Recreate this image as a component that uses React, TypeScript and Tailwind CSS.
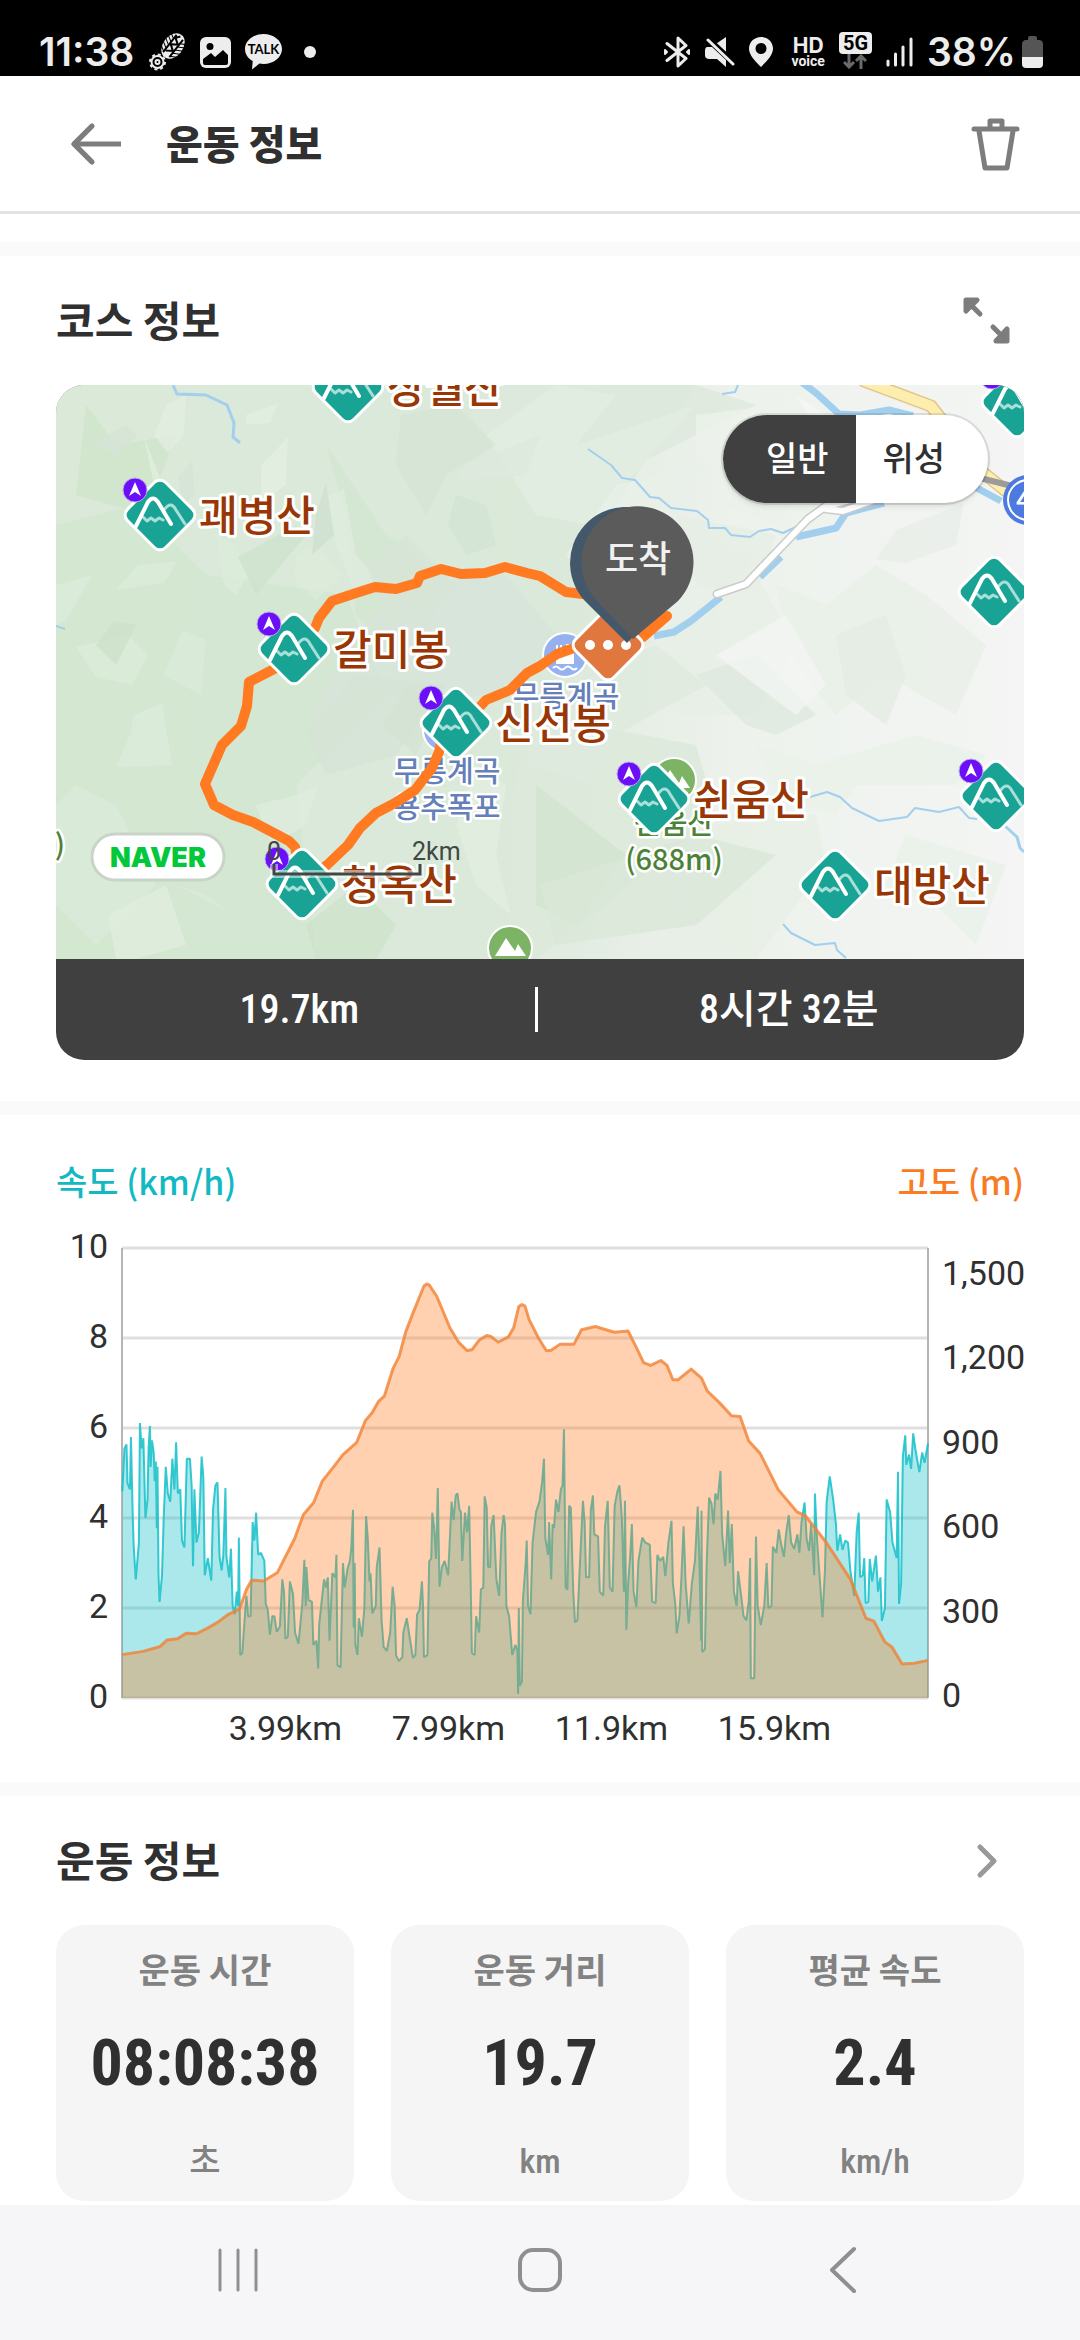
import { useState } from "react";

const peaks = [
  { name: "상월산", x: 292, y: 2, flag: false },
  { name: "괘병산", x: 104, y: 130, flag: true },
  { name: "갈미봉", x: 238, y: 264, flag: true },
  { name: "청옥산", x: 246, y: 499, flag: true },
  { name: "신선봉", x: 400, y: 338, flag: true },
  { name: "쉰움산", x: 598, y: 414, flag: true },
  { name: "대방산", x: 779, y: 500, flag: false },
  { name: "", x: 938, y: 207, flag: false },
  { name: "", x: 940, y: 411, flag: true },
  { name: "", x: 961, y: 17, flag: true },
];

const route =
  "M611 231 L587 252 L552 262 L518 263 L501 269 L484 281 L471 288 L454 305 L430 315 L421 325 L400 338 L386 352 L383 367 L376 383 L359 405 L339 418 L320 428 L304 443 L292 460 L271 480 L246 499 L239 462 L233 456 L197 437 L177 430 L158 420 L149 399 L166 360 L185 341 L191 321 L193 297 L220 283 L238 264 L259 243 L263 233 L276 216 L300 208 L319 202 L340 204 L361 198 L364 191 L385 184 L405 189 L429 188 L449 182 L471 188 L484 191 L510 207 L535 210";

const streams = [
  "532,64 555,80 566,93 579,95 594,112 603,113 615,123 641,126 652,135 653,143 669,143 675,150 694,152 703,146 715,144 727,148 744,140 756,128",
  "754,412 771,407 784,412 796,423 823,436 851,432 859,423 883,427 903,422 913,433 921,434",
  "727,539 735,548 759,560 779,558 781,565 790,573",
  "666,9 679,7 682,0",
  "0,241 9,244",
];

const rivers = [
  "117,0 121,9 150,10 171,20 178,38 177,52 184,58",
  "949,441 961,452 964,463 968,467",
];

const bigRivers = [
  "744,-4 760,8 783,29 804,30 833,25 857,31",
  "740,152 780,143 790,128 828,118",
  "725,172 704,192",
  "665,212 635,236 618,247 598,251",
  "919,102 945,116",
];

// relief facets of the base map: points + tint
const relief: [string, string][] = [
  ["0,0 968,0 640,0 560,120 610,250 470,330 430,574 0,574", "#dae8d8"],
  ["640,0 700,20 560,90 500,60 430,90 410,0", "#dde9dc"],
  ["0,140 80,120 150,190 290,210 330,310 240,400 260,574 0,574", "#d2e6cf"],
  ["270,60 330,150 390,190 330,260 300,230 290,130", "#d2e6cf"],
  ["30,20 60,60 120,50 90,130 20,110", "#cfe5cc"],
  ["480,330 640,360 660,430 600,480 480,574 380,574 430,430", "#dbe9d9"],
  ["340,200 450,190 500,250 470,300 380,320 310,300 250,340 300,250", "#d7e4d9"],
  ["250,350 300,290 390,300 340,370 270,390", "#d5e3d6"],
  ["430,50 500,0 560,10 520,60 640,20 560,110 590,150 480,130", "#e2ede1"],
  ["510,170 560,100 650,80 600,150 700,170 650,230 600,260", "#e9f0e8"],
  ["620,130 720,150 700,210 640,200", "#e6eee5"],
  ["560,260 640,230 700,190 740,260 700,330 620,330", "#e7efe6"],
  ["640,30 720,20 730,60 680,90 640,70", "#ecf2eb"],
  ["700,60 760,90 720,140 670,120", "#ebf1ea"],
  ["840,145 908,118 900,160 850,178 820,174", "#e9eee8"],
  ["720,200 770,220 820,180 870,210 930,260 900,330 830,290 780,330 740,280", "#e8f0e7"],
  ["640,290 700,270 760,330 720,350 690,340", "#dfe9de"],
  ["780,250 830,230 850,290 830,340 790,310", "#e3ece2"],
  ["700,360 760,380 860,350 930,370 900,400 800,400 780,430 720,410", "#e9f1e8"],
  ["480,300 600,260 650,300 560,350 540,400 470,380", "#dfeadd"],
  ["640,440 760,430 770,480 740,520 700,574 600,574 640,500", "#e6efe5"],
  ["850,450 950,480 920,560 880,520 830,500", "#e9f1e8"],
  ["480,400 570,470 520,540 480,520", "#d2e4cf"],
  ["484,500 640,450 720,470 640,540 500,560", "#d9e7d8"],
  ["110,20 130,10 128,50 112,68 98,50", "#e2eee1"],
  ["190,30 222,18 214,38 190,40", "#e2eee1"],
  ["205,80 232,52 230,100 205,118", "#e2efe1"],
  ["88,52 106,98 130,118 100,110", "#e1efdf"],
  ["160,150 180,160 192,190 180,210 168,200", "#dcecdb"],
  ["270,112 288,104 300,170 322,195 300,210 280,160", "#dfecde"],
  ["240,170 262,160 286,190 260,215 238,195", "#dcebda"],
  ["82,180 122,176 108,198 60,205", "#dbecd9"],
  ["0,200 36,190 10,236 0,240", "#dcecdb"],
  ["20,262 72,250 92,270 76,300 40,292", "#dbecd9"],
  ["78,330 106,318 116,380 60,382 74,350", "#dcecdb"],
  ["40,260 58,236 80,240 60,280", "#cde2ca"],
  ["126,245 150,255 145,310 108,290", "#dbebd9"],
  ["0,420 20,400 60,420 100,500 40,560 0,520", "#dbebd9"],
  ["52,530 110,500 130,560 80,574 60,574", "#dfeedd"],
  ["120,500 150,510 178,530 160,520", "#dcebda"],
  ["200,420 240,410 262,400 250,440 215,460", "#dfecde"],
  ["420,380 450,400 440,470 455,530 420,500 400,440", "#e1ede0"],
  ["326,340 352,300 380,330 360,370", "#d3e2d2"],
  ["345,30 400,20 440,60 390,90 370,130 340,80", "#d6e4d6"],
  ["410,80 484,50 470,90 400,95", "#dfe9df"],
  ["400,110 430,120 440,160 410,170 392,140", "#d2e2d3"],
  ["310,180 350,150 400,200 370,240 330,230", "#d6e5d6"],
  ["36,58 70,40 82,50 60,70", "#d6e4d7"],
  ["122,92 136,76 138,108 128,120", "#d5e4d6"],
  ["260,130 270,98 278,150 256,170", "#cfe0cf"],
  ["182,172 240,140 250,150 200,210", "#cee2cc"],
  ["250,540 300,500 340,540 320,574 260,574", "#cde2ca"],
  ["740,10 800,50 860,60 840,100 780,80", "#f5f6f5"],
  ["660,270 730,230 770,300 740,330", "#f2f5f2"],
];

const elevation =
  "0,994 61,986 111,974 131,958 161,955 186,942 216,943 251,928 281,913 306,897 341,882 361,835 376,812 411,814 451,793 501,710 526,652 556,622 581,570 611,538 641,505 681,475 706,422 726,402 744,375 761,362 786,295 804,265 823,205 846,155 876,93 884,88 891,90 913,118 951,195 976,230 1001,251 1016,248 1036,225 1058,214 1070,216 1091,230 1121,217 1136,195 1151,143 1160,138 1169,142 1181,175 1208,220 1231,251 1245,250 1271,235 1311,235 1333,200 1373,192 1428,206 1468,203 1490,240 1513,280 1533,287 1563,275 1581,287 1598,322 1613,322 1651,296 1681,318 1698,350 1733,378 1768,410 1793,412 1818,472 1851,502 1903,590 1958,645 1983,655 2043,720 2113,810 2158,905 2181,912 2213,963 2233,975 2263,1017 2298,1015 2338,1008";

const speed =
  "1,595 7,490 13,480 16,575 23,590 26,462 31,650 34,730 40,810 49,720 52,428 57,490 62,465 68,660 74,615 77,490 81,435 83,535 87,470 92,500 95,570 98,522 101,685 103,535 106,800 109,865 116,800 121,660 127,535 133,600 140,620 146,515 152,590 157,475 162,600 169,590 174,715 181,732 188,515 197,515 202,580 206,778 210,590 216,720 223,695 231,510 236,560 240,800 249,758 259,813 264,640 271,580 277,573 283,755 289,788 294,750 300,587 303,755 311,805 316,735 321,875 327,895 333,840 337,875 339,708 343,995 349,990 358,880 361,850 366,900 373,900 379,670 384,715 389,647 395,750 403,745 413,765 417,870 423,885 429,945 436,900 442,900 449,938 458,925 465,810 470,840 474,955 481,950 487,815 496,845 502,940 512,967 523,870 529,762 533,875 535,780 541,860 551,865 555,970 564,960 569,1028 572,920 581,850 586,810 592,830 597,805 602,960 610,795 619,805 622,750 625,1020 634,1025 641,770 646,830 654,785 661,765 665,735 670,640 672,928 675,770 677,970 683,995 687,905 696,950 703,880 708,655 713,710 718,815 721,795 726,893 736,875 739,780 747,732 753,910 759,975 768,985 778,940 785,828 791,875 795,995 803,1010 813,1000 816,940 826,905 836,960 844,1002 851,995 856,895 863,885 870,815 873,870 876,1000 886,995 891,765 897,760 900,647 905,680 911,760 916,587 921,828 928,780 936,765 946,800 951,710 956,620 962,665 968,605 973,600 979,640 983,645 987,765 995,647 1001,695 1007,630 1011,800 1015,990 1023,995 1027,900 1036,940 1041,835 1048,830 1052,607 1058,635 1062,780 1068,780 1071,680 1078,653 1086,810 1094,850 1101,695 1107,653 1111,675 1115,875 1123,900 1132,995 1141,970 1147,985 1149,1090 1151,880 1154,1070 1160,1060 1163,860 1171,770 1174,715 1178,875 1185,895 1191,720 1201,645 1211,620 1219,570 1224,515 1228,710 1236,750 1239,670 1245,810 1249,675 1253,685 1259,615 1266,645 1273,590 1278,580 1282,443 1287,830 1292,835 1297,630 1302,635 1309,840 1314,915 1321,910 1329,760 1337,618 1342,670 1346,805 1355,805 1360,640 1366,605 1370,700 1381,705 1386,840 1396,850 1401,680 1409,618 1415,830 1423,840 1429,630 1437,595 1443,580 1450,660 1456,840 1459,618 1463,933 1468,820 1474,755 1479,675 1484,840 1492,878 1498,765 1509,708 1518,720 1531,725 1538,865 1548,868 1553,750 1561,765 1570,755 1576,802 1585,720 1594,667 1598,820 1605,870 1609,942 1617,900 1623,800 1629,680 1635,820 1644,918 1653,820 1662,765 1670,632 1675,765 1680,960 1681,642 1683,988 1691,980 1696,770 1703,610 1710,625 1716,675 1721,600 1728,615 1736,545 1741,700 1750,778 1758,642 1763,770 1769,675 1775,840 1783,875 1787,790 1796,850 1803,900 1811,910 1818,865 1822,758 1824,1052 1834,1052 1839,705 1844,875 1853,922 1863,875 1870,770 1875,880 1884,875 1888,730 1898,745 1905,688 1911,720 1920,755 1926,700 1934,653 1941,720 1950,735 1959,700 1965,745 1971,670 1980,622 1986,710 1993,740 1999,675 2008,800 2010,600 2016,710 2025,820 2032,903 2039,790 2044,620 2053,558 2063,615 2071,675 2075,740 2083,700 2090,738 2098,715 2106,720 2113,790 2124,850 2131,695 2137,647 2141,805 2149,800 2153,758 2157,868 2165,865 2169,760 2176,815 2187,752 2193,840 2200,805 2204,912 2213,880 2218,615 2228,645 2235,720 2247,758 2251,547 2254,870 2260,820 2265,510 2272,458 2275,530 2283,505 2289,540 2295,453 2301,490 2313,548 2321,500 2328,525 2338,478";

const speedTicks = ["10", "8", "6", "4", "2", "0"];
const elevationTicks = ["1,500", "1,200", "900", "600", "300", "0"];
const distanceTicks = ["3.99km", "7.99km", "11.9km", "15.9km"];

const stats = [
  { label: "운동 시간", value: "08:08:38", unit: "초" },
  { label: "운동 거리", value: "19.7", unit: "km" },
  { label: "평균 속도", value: "2.4", unit: "km/h" },
];

function StatusBar() {
  return (
    <div className="flex h-[76px] items-center justify-between bg-black pt-7 pr-[37px] pl-[39px] font-['Inter',sans-serif] text-[#ededed]">
      <div className="flex items-center gap-[14px]">
        <span className="text-[39px] leading-[40px] font-semibold">11:38</span>
        <svg width="38" height="38" viewBox="0 0 38 38" fill="none">
          <g transform="rotate(38 25 13)">
            <ellipse cx="25" cy="13" rx="10" ry="14" fill="#ededed" />
            <g stroke="#000" strokeWidth="1">
              <path d="M14 3l7 4M14 7l7 4M14 11l7 4M14 15l7 4M14 19l7 4M36 3l-7 4M36 7l-7 4M36 11l-7 4M36 15l-7 4M36 19l-7 4" />
              <path d="M21 2v22M29 2v22M25 1l-3 4 6 4-6 4 6 4-6 4" strokeWidth="2" />
            </g>
          </g>
          <circle cx="9.500" cy="29" r="6" stroke="#ededed" strokeWidth="2" />
          <circle cx="9.500" cy="29" r="7.500" stroke="#ededed" strokeWidth="2" strokeDasharray="3 2.900" />
          <circle cx="9.500" cy="29" r="2" stroke="#ededed" strokeWidth="2" />
        </svg>
        <svg width="31" height="31" viewBox="0 0 31 31">
          <rect width="31" height="31" rx="6" fill="#ededed" />
          <circle cx="10" cy="9.500" r="3.500" />
          <path d="M3 22l8-6 4 4 8-7 5 5v8a2 2 0 0 1-2 2H5a2 2 0 0 1-2-2z" />
        </svg>
        <svg width="37" height="36" viewBox="0 0 37 36">
          <path d="M18.500 0C28.700 0 37 6.700 37 15s-8.300 15-18.500 15c-1.500 0-2.800-.1-4.100-.4L7 35.500l.7-8.500C3 24.500 0 20 0 15 0 6.700 8.300 0 18.500 0z" fill="#ededed" />
          <text x="18.500" y="20" textAnchor="middle" fontSize="13" fontWeight="700" fontFamily="Lato, sans-serif" fill="#000">
            TALK
          </text>
        </svg>
        <span className="ml-2 h-3 w-3 rounded-full bg-[#ededed]" />
      </div>
      <div className="flex items-center gap-[14px]">
        <svg width="28" height="32" viewBox="0 0 28 32" fill="none" stroke="#ededed" strokeWidth="3" strokeLinejoin="round" strokeLinecap="round">
          <path d="M4 7.500l19 15-8 7.500V2l8 7.500-19 15" />
          <path d="M2 14v4l2-2zM26 14v4l-2-2z" strokeWidth="2" />
        </svg>
        <svg width="30" height="30" viewBox="0 0 30 30" fill="#ededed">
          <path d="M21 0v15L11.500 6.500zM2 10h5l14 13v7l-9-8H5c-3 0-5-1-5-4v-4c0-2 .5-3.500 2-4z" />
          <path d="M5 1.500l25 24" stroke="#000" strokeWidth="3" />
          <path d="M3 3l25 24" stroke="#ededed" strokeWidth="3" strokeLinecap="round" />
        </svg>
        <svg width="24" height="30" viewBox="0 0 24 30">
          <path fillRule="evenodd" d="M12 0c6.600 0 12 5 12 11.500C24 18 18 24 12 30 6 24 0 18 0 11.500 0 5 5.400 0 12 0zm0 6a5.500 5.500 0 1 0 0 11 5.500 5.500 0 0 0 0-11z" fill="#ededed" />
        </svg>
        <div className="flex flex-col items-center pl-1">
          <span className="text-[21px] leading-[18px] font-bold">HD</span>
          <span className="font-['Roboto',sans-serif] text-[14px] leading-[12px] font-bold">voice</span>
        </div>
        <div className="-mt-1 flex flex-col items-center">
          <span className="rounded-[4px] bg-[#ededed] px-1 font-['Roboto',sans-serif] text-[20px] leading-[22px] font-bold text-black">5G</span>
          <svg width="24" height="15" viewBox="0 0 24 15" fill="none" stroke="#6a6a6a" strokeWidth="3">
            <path d="M6 0v12M1 8l5 5 5-5M18 15V3M13 7l5-5 5 5" />
          </svg>
        </div>
        <svg width="27" height="30" viewBox="0 0 27 30" stroke="#ededed" strokeWidth="3" strokeLinecap="round">
          <path d="M2 24v4M9.500 17v11M17 10v18M25 2v26" />
        </svg>
        <div className="flex items-center gap-[6px]">
          <span className="text-[39px] leading-[40px] font-semibold">38%</span>
          <svg width="21" height="32" viewBox="0 0 21 32">
            <path d="M6 2q0-2 2-2h5q2 0 2 2v2h3q3 1 3 4v13H0V8q0-3 3-4h3z" fill="#555" />
            <path d="M0 21h21v7q0 4-4 4H4q-4 0-4-4z" fill="#ededed" />
          </svg>
        </div>
      </div>
    </div>
  );
}

function Header() {
  return (
    <header className="flex h-[138px] items-center border-b-[3px] border-[#e3e3e3] pr-14 pl-[70px]">
      <button type="button" aria-label="뒤로">
        <svg width="52" height="42" viewBox="0 0 52 42" fill="none" stroke="#7d7d7d" strokeWidth="5">
          <path d="M51 21H4M22 3L4 21l18 18" strokeLinejoin="round" />
          <path d="M22 3L4 21l18 18" strokeLinecap="round" strokeLinejoin="round" />
        </svg>
      </button>
      <h1 className="ml-[44px] flex-1 pb-1 text-[40px] leading-[48px] font-black">운동 정보</h1>
      <button type="button" aria-label="삭제">
        <svg width="56" height="56" viewBox="0 0 56 56" fill="none" stroke="#7d7d7d" strokeWidth="5" strokeLinecap="round" strokeLinejoin="round">
          <path d="M6 13h43M11 15l6 37h22l6-37M22 12V5h12v7" />
        </svg>
      </button>
    </header>
  );
}

function PeakMarker({ x, y, flag }: { x: number; y: number; flag: boolean }) {
  return (
    <g transform={`translate(${x} ${y})`}>
      <rect x="-27" y="-27" width="54" height="54" rx="8" transform="rotate(45)" fill="#19a395" stroke="#fff" strokeWidth="3" />
      <g fill="none" strokeLinecap="round" strokeLinejoin="round" strokeWidth="3">
        <path d="M-17 2l4 4 4-3 4 3 4-3 4 2M4 -5q7-10 12 0l9 14" stroke="#a9dfd9" />
        <path d="M-24 11L-12 -13q5-7 10 0L11 9" stroke="#fff" strokeWidth="4" />
      </g>
      {flag && (
        <g transform="translate(-25 -25)">
          <circle r="12" fill="#6b0ff8" stroke="#b9a9e8" strokeWidth="1" />
          <path d="M0 -8l6 14-6-4-6 4z" fill="#fff" />
        </g>
      )}
    </g>
  );
}

function ParkMarker({ x, y }: { x: number; y: number }) {
  return (
    <g transform={`translate(${x} ${y})`}>
      <circle r="22" fill="#7db365" stroke="#fff" strokeWidth="2" />
      <path d="M-15 8L-4 -10 5 3l3-7 8 12z" fill="#fff" />
    </g>
  );
}

function CourseMap() {
  return (
    <svg className="block h-full w-full" viewBox="0 0 968 574" preserveAspectRatio="xMidYMid slice" fontFamily="'Noto Sans CJK KR', sans-serif">
      <defs>
        <linearGradient id="land" x1="0" y1="0" x2="1" y2="0">
          <stop offset="0" stopColor="#d9e8d7" />
          <stop offset=".45" stopColor="#dde9dc" />
          <stop offset=".7" stopColor="#edf2ec" />
          <stop offset="1" stopColor="#f4f5f4" />
        </linearGradient>
      </defs>
      <rect width="968" height="574" fill="url(#land)" />
      {relief.map(([points, tint]) => (
        <polygon key={points} points={points} fill={tint} fillOpacity=".8" />
      ))}

      <g fill="none" stroke="#a3cfee" strokeLinejoin="round">
        {streams.map((p) => (
          <polyline key={p} points={p} strokeWidth="2" />
        ))}
        {rivers.map((p) => (
          <polyline key={p} points={p} strokeWidth="3" />
        ))}
        {bigRivers.map((p) => (
          <polyline key={p} points={p} strokeWidth="7" />
        ))}
      </g>

      <g fill="none" strokeLinecap="round" strokeLinejoin="round">
        <path d="M808 -4L875 21l14 18M920 82l30 24" stroke="#e2c38a" strokeWidth="13" />
        <path d="M808 -4L875 21l14 18M920 82l30 24" stroke="#fdeeb0" strokeWidth="10" />
        <path d="M824 113l-37 13-17-2M794 115l-24 6-18 13-62 65-29 10" stroke="#cbcbcb" strokeWidth="9" />
        <path d="M824 113l-37 13-17-2M794 115l-24 6-18 13-62 65-29 10" stroke="#fff" strokeWidth="6" />
        <path d="M920 92l36 9" stroke="#9b9b9b" strokeWidth="6" />
      </g>
      <circle cx="972" cy="115" r="25" fill="#4d79e0" />
      <circle cx="972" cy="115" r="20" fill="none" stroke="#fff" strokeWidth="2" />
      <text x="960" y="125" fontSize="28" fontWeight="500" fill="#fff">
        4
      </text>

      <g transform="translate(509 270)">
        <circle r="22" fill="#96b1f0" stroke="#fff" strokeWidth="2" />
        <path d="M-8 -10v6M-4 -10v6M-8 8v-6l10-6v-6h6v18z" fill="#fff" stroke="#fff" strokeWidth="2" />
        <path d="M-12 13q3-3 6 0t6 0 6 0 6 0" fill="none" stroke="#fff" strokeWidth="2" />
      </g>
      <circle cx="389" cy="345" r="22" fill="#96b1f0" stroke="#fff" strokeWidth="2" />
      <g fontSize="29" fontWeight="500" fill="#657fbb" stroke="#fff" strokeWidth="5" strokeLinejoin="round" paintOrder="stroke" textAnchor="middle">
        <text x="510" y="322">무릉계곡</text>
        <text x="391" y="397">무릉계곡</text>
        <text x="391" y="433">용추폭포</text>
      </g>

      <ParkMarker x={618} y={395} />
      <ParkMarker x={454} y={563} />
      <g fontSize="29" fontWeight="500" fill="#4c8238" stroke="#fff" strokeWidth="5" strokeLinejoin="round" paintOrder="stroke" textAnchor="middle">
        <text x="618" y="449">쉰움산</text>
        <text x="618" y="485">(688m)</text>
        <text x="4" y="470">)</text>
      </g>

      <path d={route} fill="none" stroke="#ff7a20" strokeWidth="10" strokeLinejoin="round" strokeLinecap="round" />

      {peaks.map((p) => (
        <g key={`${p.x}-${p.y}`}>
          <PeakMarker x={p.x} y={p.y} flag={p.flag} />
          <text x={p.x + 39} y={p.y + 16} fontSize="42" fontWeight="500" fill="#983705" stroke="#fff" strokeWidth="6" strokeLinejoin="round" paintOrder="stroke">
            {p.name}
          </text>
        </g>
      ))}

      <g transform="translate(552 260)">
        <rect x="-27" y="-27" width="54" height="54" rx="8" transform="rotate(45)" fill="#df773e" stroke="#fff" strokeWidth="3" />
        <circle cx="-18" r="5" fill="#fff" />
        <circle r="5" fill="#fff" />
        <circle cx="18" r="5" fill="#fff" />
      </g>
      <path d="M571 258L532 219a56 56 0 1 1 80 -4z" fill="#44586c" />
      <path d="M577 254L541 216a56 56 0 1 1 81 0z" fill="#5b5b5b" />
      <text x="582" y="187" textAnchor="middle" fontSize="36" fontWeight="500" fill="#f0f0f0">
        도착
      </text>

      <rect x="36" y="449" width="132" height="46" rx="23" fill="#fff" stroke="#c9d3c8" strokeWidth="3" />
      <text x="102" y="482" textAnchor="middle" fontSize="27" fontWeight="900" fontFamily="Inter, sans-serif" fill="#03c83c">
        NAVER
      </text>
      <path d="M218 479v10h146v-10" fill="none" stroke="#fff" strokeOpacity=".5" strokeWidth="8" />
      <path d="M218 479v10h146v-10" fill="none" stroke="#404745" strokeWidth="3" />
      <g fontSize="25" fontFamily="Roboto, sans-serif" fill="#404745">
        <text x="211" y="475">0</text>
        <text x="356" y="475">2km</text>
      </g>
    </svg>
  );
}

function CourseSection() {
  const [mode, setMode] = useState("normal");

  return (
    <section className="px-14 pb-[41px]">
      <div className="flex h-[129px] items-center justify-between pr-3">
        <h2 className="pb-1 text-[42px] leading-[48px] font-bold">코스 정보</h2>
        <button type="button" aria-label="전체 화면">
          <svg width="50" height="50" viewBox="0 0 50 50" fill="none" stroke="#7d7d7d" strokeWidth="5" strokeLinecap="round" strokeLinejoin="round">
            <path d="M18 18L5 5M4 15V4h11zM31 31l13 13M45 33v12H34z" />
          </svg>
        </button>
      </div>
      <div className="overflow-hidden rounded-[28px] bg-[#404040]">
        <div className="relative h-[574px]">
          <CourseMap />
          <div className="absolute top-[30px] right-9 flex h-[88px] w-[265px] overflow-hidden rounded-full bg-white text-[34px] leading-[48px] font-medium shadow-md ring-2 ring-black/10">
            <button
              type="button"
              onClick={() => setMode("normal")}
              className={mode === "normal" ? "flex-1 bg-[#404040] pb-1 pl-4 text-white" : "flex-1 pb-1 pl-4"}
            >
              일반
            </button>
            <button
              type="button"
              onClick={() => setMode("satellite")}
              className={mode === "satellite" ? "flex-1 bg-[#404040] pr-4 pb-1 text-white" : "flex-1 pr-4 pb-1"}
            >
              위성
            </button>
          </div>
        </div>
        <div className="flex h-[101px] items-center text-center font-['Roboto_Condensed','Noto_Sans_CJK_KR',sans-serif] text-[40px] leading-[48px] font-medium text-white">
          <span className="flex-1 pl-2">19.7km</span>
          <span className="h-[45px] w-[3px] bg-white" />
          <span className="flex-1 pl-4">8시간 32분</span>
        </div>
      </div>
    </section>
  );
}

function ChartSection() {
  return (
    <section className="px-14 pt-[42px] pb-[34px]">
      <div className="flex justify-between text-[34px] leading-[48px] font-medium">
        <span className="text-[#12b9c3]">속도 (km/h)</span>
        <span className="text-[#f97b24]">고도 (m)</span>
      </div>
      <div className="mt-[43px] flex h-[450px] font-['Roboto',sans-serif] text-[34px] leading-[40px]">
        <div className="-my-[22px] flex w-[66px] flex-col justify-between pr-[14px] pb-1 text-right">
          {speedTicks.map((t) => (
            <span key={t}>{t}</span>
          ))}
        </div>
        <svg className="h-full min-w-0 flex-1 overflow-visible" viewBox="0 0 2338 1100" preserveAspectRatio="none">
          {[0, 220, 440, 660, 880, 1100].map((y) => (
            <path key={y} d={`M0 ${y}H2338`} stroke="#dfdfdf" strokeWidth="3" vectorEffect="non-scaling-stroke" />
          ))}
          <path d="M0 0V1100M2338 0V1100" stroke="#b5b5b5" strokeWidth="2" vectorEffect="non-scaling-stroke" />
          <polygon points={`0,1100 ${speed} 2338,1100`} fill="#14bfc9" fillOpacity=".36" />
          <polyline points={speed} fill="none" stroke="#14bfc9" strokeOpacity=".85" strokeWidth="2" strokeLinejoin="bevel" vectorEffect="non-scaling-stroke" />
          <polygon points={`0,1100 ${elevation} 2338,1100`} fill="#ff7a20" fillOpacity=".35" />
          <polyline points={elevation} fill="none" stroke="#f28132" strokeOpacity=".8" strokeWidth="3" strokeLinejoin="round" vectorEffect="non-scaling-stroke" />
        </svg>
        <div className="mt-[5px] -mb-[17px] flex w-24 flex-col justify-between pl-[14px]">
          {elevationTicks.map((t) => (
            <span key={t}>{t}</span>
          ))}
        </div>
      </div>
      <div className="mt-[10px] mr-[168px] ml-[148px] grid grid-cols-4 text-center font-['Roboto',sans-serif] text-[34px] leading-[40px]">
        {distanceTicks.map((t) => (
          <span key={t}>{t}</span>
        ))}
      </div>
    </section>
  );
}

function StatsSection() {
  return (
    <section className="px-14 pb-1">
      <div className="flex h-[129px] items-center justify-between pr-6">
        <h2 className="pb-1 text-[42px] leading-[48px] font-bold">운동 정보</h2>
        <button type="button" aria-label="더보기">
          <svg width="26" height="38" viewBox="0 0 26 38" fill="none" stroke="#999" strokeWidth="5" strokeLinecap="round" strokeLinejoin="round">
            <path d="M6 5l14 14L6 33" />
          </svg>
        </button>
      </div>
      <div className="grid grid-cols-3 gap-[37px]">
        {stats.map((s) => (
          <div key={s.label} className="flex h-[276px] flex-col items-center rounded-[28px] bg-[#f5f5f5] pt-5 text-[34px] font-bold text-[#828282]">
            <span className="leading-[48px]">{s.label}</span>
            <span className="mt-[35px] font-['Roboto_Condensed',sans-serif] text-[64px] leading-[72px] text-[#303030]">
              {s.value}
            </span>
            <span className="mt-[37px] font-['Roboto_Condensed','Noto_Sans_CJK_KR',sans-serif] leading-[48px] font-medium">{s.unit}</span>
          </div>
        ))}
      </div>
    </section>
  );
}

function NavBar() {
  return (
    <nav className="flex h-[135px] items-center justify-between bg-[#f6f6f8] px-[206px] pb-[5px]">
      <button type="button" aria-label="최근 앱">
        <svg width="64" height="48" viewBox="0 0 64 48" stroke="#8f8f8f" strokeWidth="3" strokeLinecap="round">
          <path d="M14 4v40M32 4v40M50 4v40" />
        </svg>
      </button>
      <button type="button" aria-label="홈">
        <svg width="48" height="48" viewBox="0 0 48 48" fill="none" stroke="#8f8f8f" strokeWidth="4">
          <rect x="4" y="4" width="40" height="40" rx="13" />
        </svg>
      </button>
      <button type="button" aria-label="이전">
        <svg width="64" height="48" viewBox="0 0 64 48" fill="none" stroke="#8f8f8f" strokeWidth="4" strokeLinecap="round" strokeLinejoin="round">
          <path d="M44 3L22 24l22 21" />
        </svg>
      </button>
    </nav>
  );
}

export default function App() {
  return (
    <div className="min-h-screen bg-white font-['Noto_Sans_CJK_KR',sans-serif] text-[#303030]">
      <StatusBar />
      <Header />
      <main>
        <div className="mt-7 h-[14px] bg-[#fafafa]" />
        <CourseSection />
        <div className="h-[14px] bg-[#fafafa]" />
        <ChartSection />
        <div className="h-[14px] bg-[#fafafa]" />
        <StatsSection />
      </main>
      <NavBar />
    </div>
  );
}
